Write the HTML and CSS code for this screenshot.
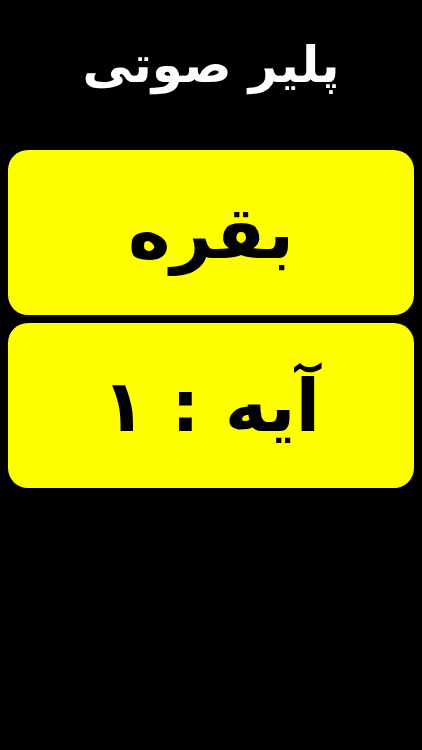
FILE: index.html
```html
<!DOCTYPE html>
<html lang="fa" dir="rtl">
<head>
<meta charset="utf-8">
<link rel="stylesheet" href="styles.css">
</head>
<body>
<div class="screen">
  <h1 class="title">پلیر صوتی</h1>
  <div class="cards">
    <div class="card"><span class="card-text">بقره</span></div>
    <div class="card"><span class="card-text">آیه : ۱</span></div>
  </div>
</div>
</body>
</html>
```
FILE: styles.css
```css
html, body {
  margin: 0;
  padding: 0;
  background: #000;
}
.screen {
  width: 422px;
  height: 750px;
  background: #000;
  display: flex;
  flex-direction: column;
  font-family: "DejaVu Sans", sans-serif;
}
.title {
  margin: 0;
  height: 150px;
  display: flex;
  align-items: center;
  justify-content: center;
  color: #fff;
  font-size: 50px;
  font-weight: bold;
  padding-bottom: 20px;
  box-sizing: border-box;
}
.cards {
  display: flex;
  flex-direction: column;
  gap: 8px;
  padding: 0 8px;
}
.card {
  height: 165px;
  background: #ffff00;
  border-radius: 20px;
  display: flex;
  align-items: center;
  justify-content: center;
}
.card-text {
  color: #000;
  font-size: 72px;
  font-weight: bold;
}
```
